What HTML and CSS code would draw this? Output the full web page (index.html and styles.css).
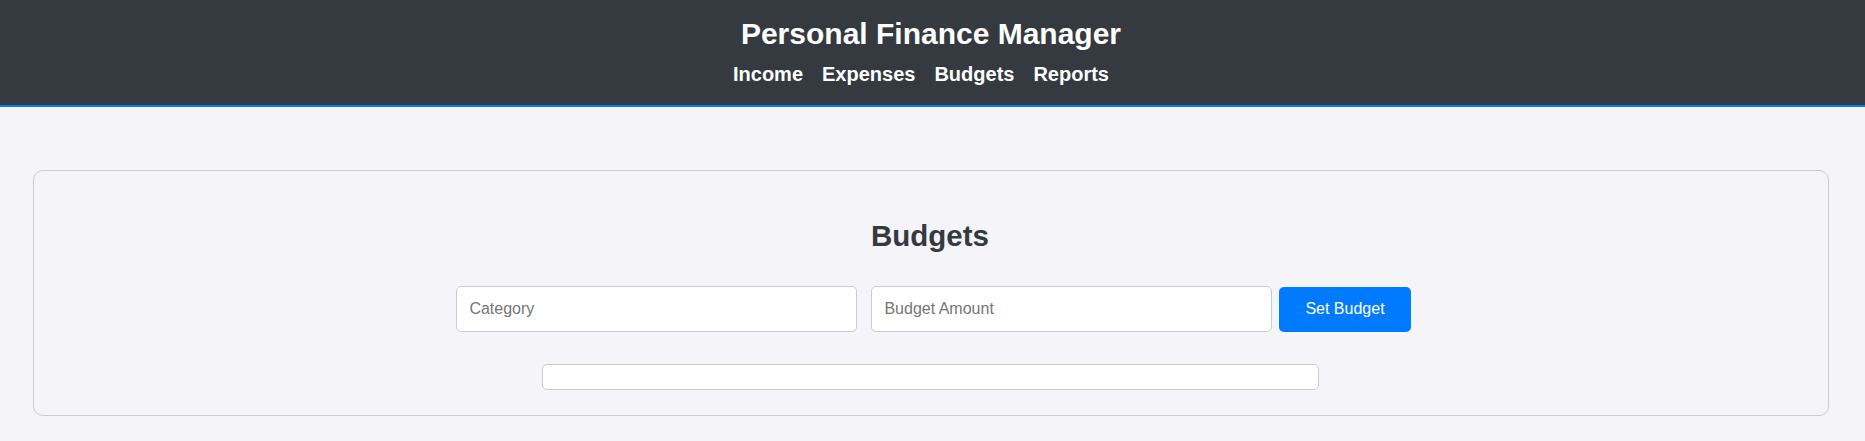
FILE: index.html
```html
<!DOCTYPE html>
<html lang="en">
<head>
<meta charset="utf-8">
<title>Personal Finance Manager</title>
<link rel="stylesheet" href="styles.css">
</head>
<body>
<header class="site-header">
  <h1 class="site-title">Personal Finance Manager</h1>
  <nav class="site-nav">
    <a href="#income">Income</a>
    <a href="#expenses">Expenses</a>
    <a href="#budgets">Budgets</a>
    <a href="#reports">Reports</a>
  </nav>
</header>
<main class="page">
  <section class="card" id="budgets">
    <h2 class="card-title">Budgets</h2>
    <form class="budget-form">
      <input class="field" type="text" placeholder="Category">
      <input class="field" type="number" placeholder="Budget Amount">
      <button class="btn" type="button">Set Budget</button>
    </form>
    <ul class="budget-list"></ul>
  </section>
</main>
</body>
</html>
```
FILE: styles.css
```css
* { box-sizing: border-box; }

html, body {
  margin: 0;
  padding: 0;
}

body {
  background: #f4f4f9;
  font-family: "Liberation Sans", Arial, sans-serif;
  color: #343a40;
}

.site-header {
  background: #343a40;
  color: #fff;
  text-align: center;
  padding: 16px 0 19px;
  border-bottom: 2px solid #007bff;
}

.site-title {
  margin: 0;
  padding-right: 3px;
  font-size: 30px;
  line-height: 36px;
  font-weight: bold;
}

.site-nav {
  margin-top: 10px;
  display: flex;
  justify-content: center;
  line-height: 24px;
}

.site-nav a {
  color: #fff;
  text-decoration: none;
  font-weight: bold;
  font-size: 20px;
  margin-right: 19px;
}

.site-nav a:last-child {
  margin-right: 23px;
}

.page {
  padding: 63px 36px 20px 33px;
}

.card {
  border: 1px solid #ccc;
  border-radius: 10px;
  padding: 20px 21px 20px 19px;
  text-align: center;
}

.card-title {
  margin: 27px 0 33px;
  font-size: 29.5px;
  line-height: 35px;
  font-weight: bold;
  color: #343a40;
}

.budget-form {
  display: flex;
  justify-content: center;
  align-items: center;
  column-gap: 7px;
  margin: 0;
}

.field {
  width: 401px;
  height: 46px;
  margin-left: 7px;
  padding: 0 12px;
  border: 1px solid #ccc;
  border-radius: 5px;
  background: #fff;
  font-family: "Liberation Sans", Arial, sans-serif;
  font-size: 16px;
  color: #333;
}

.field::placeholder {
  color: #757575;
}

.btn {
  height: 45px;
  padding: 0 26px;
  border: none;
  border-radius: 5px;
  background: #007bff;
  color: #fff;
  font-family: "Liberation Sans", Arial, sans-serif;
  font-size: 16px;
  cursor: pointer;
}

.budget-list {
  list-style: none;
  width: 777px;
  height: 26px;
  margin: 32px auto 5px;
  padding: 0;
  border: 1px solid #ccc;
  border-radius: 5px;
  background: #fff;
}
```
